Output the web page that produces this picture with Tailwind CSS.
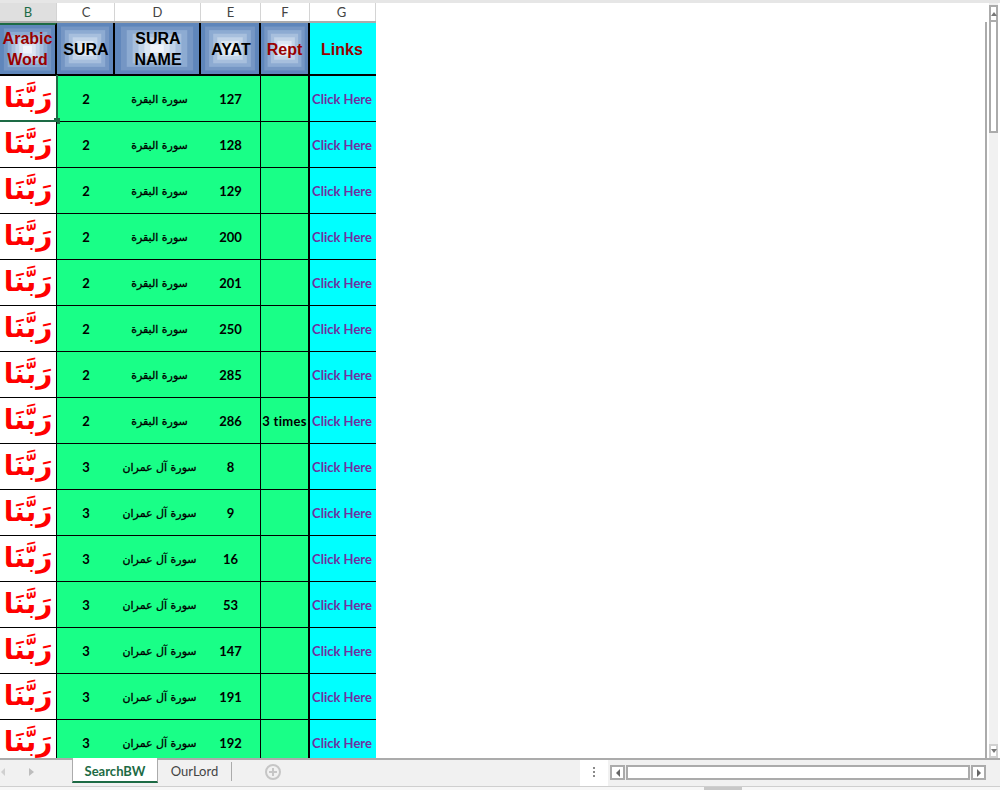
<!DOCTYPE html>
<html lang="en">

<head>
    <meta charset="UTF-8">
    <title>SearchBW</title>
    <script src="https://cdn.jsdelivr.net/npm/@tailwindcss/browser@4"></script>
</head>

<body class="bg-white overflow-hidden font-['Liberation_Sans',sans-serif]">
    <svg class="hidden">
        <symbol id="bands" viewBox="0 0 100 100" preserveAspectRatio="none">
            <rect width="100" height="100" fill="#5f86bb" />
            <rect x="7" y="7" width="86" height="86" fill="#7596c4" />
            <rect x="14" y="14" width="72" height="72" fill="#8dabd2" />
            <rect x="21" y="21" width="58" height="58" fill="#a7bfdd" />
            <rect x="28" y="28" width="44" height="44" fill="#c1d3e8" />
            <rect x="35" y="35" width="30" height="30" fill="#dae5f2" />
            <rect x="42" y="42" width="16" height="16" fill="#f0f4fa" />
        </symbol>
    </svg>

    <div class="h-[790px] flex flex-col">
        <div class="h-[3px] bg-[#e6e6e6]"></div>

        <div class="flex-1 min-h-0 flex">
            <div class="w-[985px] overflow-hidden">
                <!-- column letters -->
                <div class="grid grid-cols-[57px_58px_86px_60px_49px_66px] w-[376px] h-[20px] text-[13px] leading-[18px] text-center text-[#444] font-['Lato',sans-serif] border-b-2 border-[#ababab]">
                    <div class="bg-[#dfdfdf] text-[#1d6b45] border-r border-[#d4d4d4]">B</div>
                    <div class="border-r border-[#d4d4d4] pl-px">C</div>
                    <div class="border-r border-[#d4d4d4]">D</div>
                    <div class="border-r border-[#d4d4d4]">E</div>
                    <div class="border-r border-[#d4d4d4]">F</div>
                    <div class="border-r border-[#d4d4d4] pr-0.5">G</div>
                </div>

                <!-- sheet header -->
                <div class="grid grid-cols-[57px_58px_86px_60px_49px_66px] w-[376px] h-[53px] text-[16px] font-bold leading-[21px] text-center border-b-2 border-black">
                    <div class="relative flex items-center justify-center border-r-2 border-black pb-0.5 text-[#990000] border-t-2 border-t-[#1d6b45]">
                        <svg class="absolute inset-0 w-full h-full"><use href="#bands" /></svg>
                        <span class="relative">Arabic Word</span>
                    </div>
                    <div class="relative flex items-center justify-center border-r-2 border-black pl-0.5 pt-px">
                        <svg class="absolute inset-0 w-full h-full"><use href="#bands" /></svg>
                        <span class="relative">SURA</span>
                    </div>
                    <div class="relative flex items-center justify-center border-r-2 border-black pl-0.5">
                        <svg class="absolute inset-0 w-full h-full"><use href="#bands" /></svg>
                        <span class="relative">SURA NAME</span>
                    </div>
                    <div class="relative flex items-center justify-center border-r-2 border-black pl-0.5 pt-px">
                        <svg class="absolute inset-0 w-full h-full"><use href="#bands" /></svg>
                        <span class="relative">AYAT</span>
                    </div>
                    <div class="relative flex items-center justify-center border-r-2 border-black pt-px text-[#990000]">
                        <svg class="absolute inset-0 w-full h-full"><use href="#bands" /></svg>
                        <span class="relative">Rept</span>
                    </div>
                    <div class="flex items-center justify-center bg-[#00ffff] text-[#990000] pr-0.5 pt-px">Links</div>
                </div>

                <div id="rows"></div>
            </div>

            <!-- vertical scrollbar -->
            <div class="mt-[19px] w-[2px] bg-[#ababab]"></div>
            <div class="w-[2px]"></div>
            <div class="w-[9px] flex flex-col bg-[#f1f1f1]">
                <div class="mt-[2px] h-[15px] bg-white border-2 border-b-0 border-[#ababab] flex items-center justify-center">
                    <div class="w-0 h-0 border-x-[3px] border-x-transparent border-b-[4px] border-b-[#777]"></div>
                </div>
                <div class="h-[113px] bg-white border-2 border-[#ababab]"></div>
                <div class="flex-1"></div>
                <div class="h-[14px] bg-white border-2 border-[#d0d0d0] flex items-center justify-center">
                    <div class="w-0 h-0 border-x-[3px] border-x-transparent border-t-[4px] border-t-[#777]"></div>
                </div>
            </div>
        </div>

        <!-- tab bar -->
        <div class="h-[28px] pb-[3px] bg-[#f1f1f1] border-t-2 border-[#ababab] flex items-stretch relative font-['Lato',sans-serif] text-[13px]">
            <div class="w-[72px] flex items-center gap-[18px] pl-px">
                <div class="w-0 h-0 border-y-[4px] border-y-transparent border-r-[4px] border-r-[#d0d0d0]"></div>
                <div class="w-0 h-0 border-y-[4px] border-y-transparent border-l-[5px] border-l-[#bdbdbd] ml-[6px]"></div>
            </div>
            <div class="w-[86px] -mt-0.5 bg-white border-b-2 border-[#1d6b45] border-x border-x-[#ababab] text-[#1d6b45] font-bold text-center leading-[26px]">SearchBW</div>
            <div class="w-[74px] self-start mt-[2px] h-[19px] text-center text-[#444] leading-[19px] border-r border-[#ababab]">OurLord</div>
            <div class="ml-[33px] mt-1 w-4 h-4 rounded-full border-2 border-[#c6c6c6] flex items-center justify-center">
                <svg viewBox="0 0 10 10" class="w-[10px] h-[10px]"><path d="M5 1v8M1 5h8" stroke="#c6c6c6" stroke-width="2" /></svg>
            </div>
            <div class="absolute left-[580px] top-0 bottom-0 w-[28px] bg-white"></div>
            <div class="absolute left-[593px] top-[7px] flex flex-col gap-[2px]">
                <div class="w-[2px] h-[2px] bg-[#8a8a8a]"></div>
                <div class="w-[2px] h-[2px] bg-[#8a8a8a]"></div>
                <div class="w-[2px] h-[2px] bg-[#8a8a8a]"></div>
            </div>
            <div class="absolute left-[610px] top-[5px] w-[376px] h-[15px] flex gap-px">
                <div class="w-[15px] border-2 border-[#ababab] bg-white flex items-center justify-center">
                    <div class="w-0 h-0 border-y-[4px] border-y-transparent border-r-[4px] border-r-[#666]"></div>
                </div>
                <div class="flex-1 border-2 border-[#ababab] bg-white"></div>
                <div class="w-[15px] border-2 border-[#ababab] bg-white flex items-center justify-center">
                    <div class="w-0 h-0 border-y-[4px] border-y-transparent border-l-[4px] border-l-[#666]"></div>
                </div>
            </div>
        </div>

        <div class="h-[4px] bg-[#f7f7f7] border-t border-[#cfcfcf] pl-[704px]">
            <div class="w-[38px] h-full bg-[#c8c8c8]"></div>
        </div>
    </div>

    <script>
        const ROWS = [
            [2, 'سورة البقرة', 127, ''], [2, 'سورة البقرة', 128, ''], [2, 'سورة البقرة', 129, ''],
            [2, 'سورة البقرة', 200, ''], [2, 'سورة البقرة', 201, ''], [2, 'سورة البقرة', 250, ''],
            [2, 'سورة البقرة', 285, ''], [2, 'سورة البقرة', 286, '3 times'],
            [3, 'سورة آل عمران', 8, ''], [3, 'سورة آل عمران', 9, ''], [3, 'سورة آل عمران', 16, ''],
            [3, 'سورة آل عمران', 53, ''], [3, 'سورة آل عمران', 147, ''], [3, 'سورة آل عمران', 191, ''],
            [3, 'سورة آل عمران', 192, ''],
        ]

        // first cell of the list is the selected one
        const selection = `
            <div class="absolute left-0 top-[-1px] w-[58px] h-[47px] border-r-2 border-b-2 border-[#1d6b45]"></div>
            <div class="absolute left-[54px] top-[42px] w-[6px] h-[6px] bg-[#1d6b45]"></div>`

        const rows = document.getElementById('rows')
        rows.innerHTML = ROWS.map(([sura, name, ayat, rept], index) => `
            <div class="grid grid-cols-[57px_58px_86px_60px_49px_66px] grid-rows-[45px] w-[376px] h-[46px] border-b border-black font-['Lato',sans-serif] font-bold text-[13px] text-center leading-[47px]">
                <div class="relative bg-white border-r border-black text-[#ff0000] text-[28px] font-['DejaVu_Sans',sans-serif] leading-[44px] whitespace-nowrap">رَبَّنَا${index === 0 ? selection : ''}</div>
                <div class="bg-[#19ff87]">${sura}</div>
                <div class="bg-[#19ff87] font-['DejaVu_Sans',sans-serif] font-normal [-webkit-text-stroke:0.3px_black] text-[11px] pl-[3px] whitespace-nowrap">${name}</div>
                <div class="bg-[#19ff87] border-r border-black">${ayat}</div>
                <div class="bg-[#19ff87] border-r-2 border-black whitespace-nowrap tracking-[0.3px]">${rept}</div>
                <div class="bg-[#00ffff] text-[#7030a0] whitespace-nowrap pr-0.5">Click Here</div>
            </div>`).join('')
    </script>
</body>

</html>
